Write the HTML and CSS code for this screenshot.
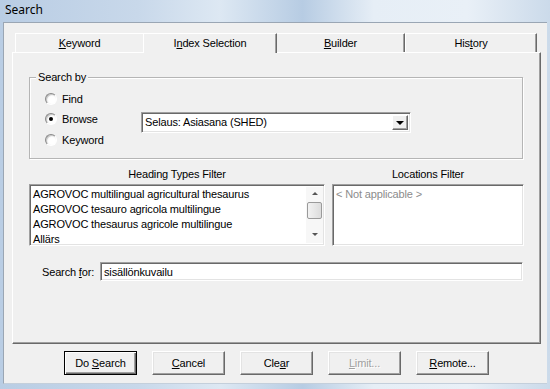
FILE: index.html
```html
<!DOCTYPE html>
<html lang="en">
<head>
    <meta charset="UTF-8">
    <meta name="viewport" content="width=device-width, initial-scale=1.0">
    <title>Search</title>
    <link rel="stylesheet" href="styles.css">
</head>
<body>
    <div class="window">
        <div class="titlebar">Search</div>
        <div class="client">
            <div class="tabs">
                <div class="tab tab-keyword"><u>K</u>eyword</div>
                <div class="tab tab-index active">I<u>n</u>dex Selection</div>
                <div class="tab tab-builder"><u>B</u>uilder</div>
                <div class="tab tab-history">His<u>t</u>ory</div>
            </div>
            <div class="panel">
                <div class="group">
                    <span class="group-title">Search by</span>
                    <div class="group-body">
                        <label class="radio"><span class="dot"></span>Find</label>
                        <label class="radio"><span class="dot checked"></span>Browse</label>
                        <div class="combo">
                            <span class="combo-text">Selaus: Asiasana (SHED)</span>
                            <span class="combo-btn"><span class="arrow-down"></span></span>
                        </div>
                        <label class="radio"><span class="dot"></span>Keyword</label>
                    </div>
                </div>

                <div class="filters">
                    <div class="filter filter-left">
                        <div class="filter-title">Heading Types Filter</div>
                        <div class="listbox">
                            <ul class="items">
                                <li>AGROVOC multilingual agricultural thesaurus</li>
                                <li>AGROVOC tesauro agricola multilingue</li>
                                <li>AGROVOC thesaurus agricole multilingue</li>
                                <li>Allärs</li>
                            </ul>
                            <div class="scrollbar">
                                <span class="sb-arrow up"></span>
                                <span class="sb-thumb"></span>
                                <span class="sb-arrow down"></span>
                            </div>
                        </div>
                    </div>
                    <div class="filter filter-right">
                        <div class="filter-title">Locations Filter</div>
                        <div class="listbox">
                            <div class="empty">&lt; Not applicable &gt;</div>
                        </div>
                    </div>
                </div>

                <div class="search-for">
                    <span class="search-label">Search <u>f</u>or:</span>
                    <div class="textbox">sisällönkuvailu</div>
                </div>
            </div>

            <div class="buttons">
                <button class="btn default">Do <u>S</u>earch</button>
                <button class="btn"><u>C</u>ancel</button>
                <button class="btn">Cle<u>a</u>r</button>
                <button class="btn disabled"><u>L</u>imit...</button>
                <button class="btn"><u>R</u>emote...</button>
            </div>
        </div>
    </div>
</body>
</html>
```

FILE: styles.css
```css
*,
*:before,
*:after{
    box-sizing: border-box;
}

html, body{
    margin: 0;
    padding: 0;
}

body{
    width: 550px;
    height: 389px;
    overflow: hidden;
    font-family: 'Liberation Sans', Arial, sans-serif;
    font-size: 11px;
    letter-spacing: -0.15px;
    color: #000;
}

.window{
    width: 550px;
    height: 389px;
    background: linear-gradient(to right, #b9cde4 0%, #c8d8ea 25%, #dde8f3 40%, #b7cce3 55%, #e6eef6 68%, #e9f0f7 85%, #cbdaea 100%);
}

.titlebar{
    height: 22px;
    padding-left: 5px;
    line-height: 19px;
    font-family: 'Noto Sans', 'Open Sans', sans-serif;
    font-size: 12px;
    letter-spacing: 0;
    color: #000;
}

/* area cliente del dialogo */
.client{
    margin-left: 3px;
    width: 544px;
    height: 362px;
    background: #f0f0f0;
    border-top: 1px solid #9aa6b4;
    border-left: 1px solid #9aa6b4;
    border-bottom: 1px solid #c4cfdb;
}

.tabs{
    display: flex;
    margin: 10px 0 0 11px;
    height: 19px;
}

.tab{
    height: 19px;
    line-height: 18px;
    text-align: center;
    background: #f0f0f0;
    border-top: 1px solid #fff;
    border-left: 1px solid #fff;
    border-right: 1px solid #696969;
    box-shadow: inset -1px 0 0 #a0a0a0;
}

.tab-keyword{
    width: 128px;
    border-right: none;
    box-shadow: none;
}
.tab-index{ width: 134px; }
.tab-builder{ width: 128px; border-left: none; }
.tab-history{ width: 132px; }

.tab.active{
    position: relative;
    z-index: 1;
    height: 20px;
    margin-bottom: -1px;
}

.panel{
    margin-left: 8px;
    width: 529px;
    height: 292px;
    border-top: 1px solid #fff;
    border-left: 1px solid #fff;
    border-right: 1px solid #696969;
    border-bottom: 1px solid #696969;
    box-shadow: inset -1px -1px 0 #a0a0a0;
    padding-top: 24px;
}

.group{
    margin-left: 16px;
    width: 494px;
    height: 82px;
    border: 1px solid #b5b5b5;
    box-shadow: inset 1px 1px 0 #fff, 1px 1px 0 #fff;
}

.group-title{
    display: block;
    width: fit-content;
    margin: -8px 0 0 6px;
    padding: 0 2px;
    line-height: 14px;
    background: #f0f0f0;
}

.group-body{
    display: grid;
    grid-template-columns: 96px 270px;
    grid-auto-rows: 20px;
    padding: 5px 0 0 15px;
}

.radio{
    grid-column: 1;
    display: flex;
    align-items: center;
    gap: 5px;
}

.radio:nth-of-type(3){
    height: 21px;
}

.dot{
    width: 12px;
    height: 12px;
    border-radius: 50%;
    background: radial-gradient(circle at 60% 60%, #fff 40%, #e4e4e4 75%);
    border: 1px solid;
    border-color: #8a8a8a #fff #fff #8a8a8a;
    box-shadow: inset 1px 1px 0 #c8c8c8;
    display: flex;
    align-items: center;
    justify-content: center;
}

.dot.checked:after{
    content: "";
    width: 4px;
    height: 4px;
    border-radius: 50%;
    background: #000;
}

.combo{
    grid-column: 2;
    grid-row: 2;
    margin-top: 3px;
    height: 21px;
    display: flex;
    border: 1px solid;
    border-color: #a0a0a0 #fff #fff #a0a0a0;
    box-shadow: inset 1px 1px 0 #696969, inset -1px -1px 0 #e3e3e3;
    background: #fff;
    padding: 2px;
}

.combo-text{
    flex: 1;
    line-height: 15px;
    padding-left: 1px;
}

.combo-btn{
    width: 16px;
    background: #f0f0f0;
    border: 1px solid;
    border-color: #fff #696969 #696969 #fff;
    box-shadow: inset -1px -1px 0 #a0a0a0;
    display: flex;
    align-items: center;
    justify-content: center;
}

.arrow-down{
    width: 0;
    height: 0;
    border-left: 4px solid transparent;
    border-right: 4px solid transparent;
    border-top: 4px solid #000;
    margin-top: 1px;
}

.filters{
    display: flex;
    gap: 7px;
    margin: 8px 0 0 16px;
}

.filter-left{ width: 296px; }
.filter-right{ width: 192px; }

.filter-title{
    text-align: center;
    line-height: 14px;
    margin-bottom: 3px;
}

.listbox{
    height: 62px;
    display: flex;
    background: #fff;
    border: 1px solid;
    border-color: #a0a0a0 #fff #fff #a0a0a0;
    box-shadow: inset 1px 1px 0 #696969, inset -1px -1px 0 #e3e3e3;
    padding: 2px;
}

.items{
    flex: 1;
    list-style: none;
    margin: 0;
    padding: 0 0 0 1px;
}

.items li{
    height: 15px;
    line-height: 15px;
    white-space: nowrap;
}

.scrollbar{
    width: 17px;
    display: flex;
    flex-direction: column;
    align-items: center;
    background: #f7f7f7;
    margin-right: -1px;
}

.sb-arrow{
    width: 0;
    height: 0;
    border-left: 3px solid transparent;
    border-right: 3px solid transparent;
}

.sb-arrow.up{
    border-bottom: 3px solid #555;
    margin-top: 5px;
}

.sb-arrow.down{
    border-top: 3px solid #555;
    margin-top: auto;
    margin-bottom: 7px;
}

.sb-thumb{
    width: 15px;
    height: 17px;
    margin-top: 7px;
    border: 1px solid #9a9a9a;
    border-radius: 2px;
    background: linear-gradient(to right, #f2f2f2, #dcdcdc);
}

.empty{
    color: #8c8c8c;
    line-height: 15px;
    padding-left: 1px;
}

.search-for{
    display: flex;
    align-items: center;
    margin: 16px 0 0 29px;
}

.search-label{
    width: 58px;
}

.textbox{
    width: 423px;
    height: 19px;
    line-height: 15px;
    background: #fff;
    border: 1px solid;
    border-color: #a0a0a0 #fff #fff #a0a0a0;
    box-shadow: inset 1px 1px 0 #696969, inset -1px -1px 0 #e3e3e3;
    padding: 2px 3px;
}

.buttons{
    display: flex;
    gap: 15px;
    margin: 7px 0 0 60px;
}

.btn{
    width: 73px;
    height: 24px;
    padding: 0;
    font-family: 'Liberation Sans', Arial, sans-serif;
    font-size: 11px;
    letter-spacing: -0.15px;
    color: #000;
    background: #f0f0f0;
    border: 1px solid;
    border-color: #fff #696969 #696969 #fff;
    box-shadow: inset -1px -1px 0 #a0a0a0, inset 1px 1px 0 #e3e3e3;
}

.btn.default{
    border: 1px solid #000;
    box-shadow: inset 1px 1px 0 #fff, inset -1px -1px 0 #696969, inset -2px -2px 0 #a0a0a0;
}

.btn.disabled{
    color: #a0a0a0;
    text-shadow: 1px 1px 0 #fff;
}
```
